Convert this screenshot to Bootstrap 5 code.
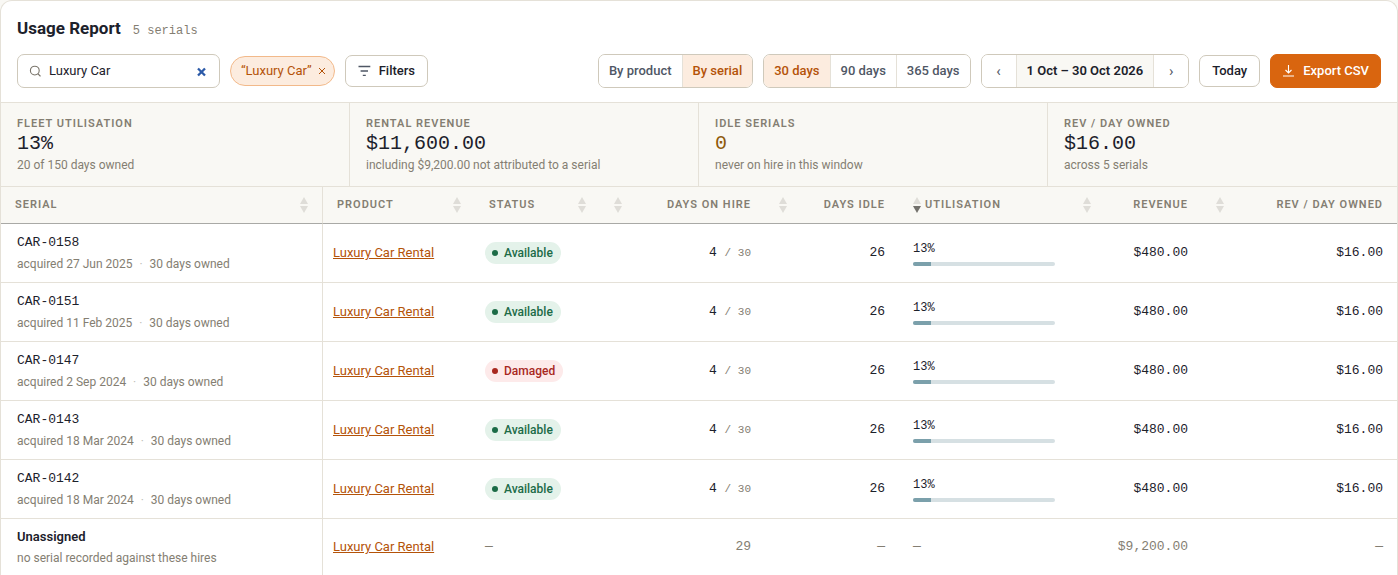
<!DOCTYPE html>
<html lang="en">
<head>
<meta charset="utf-8">
<meta name="viewport" content="width=device-width, initial-scale=1">
<title>Usage Report</title>
<link rel="stylesheet" href="https://cdn.jsdelivr.net/npm/bootstrap@5.3.0/dist/css/bootstrap.min.css">
<style>
:root{--ink:#1c212b;--slate:#4f5765;--muted:#847e72;--line:#e5e1d8;--edge:#cfc9bb;--paper:#f9f8f4;--accent:#b45309;--tint:#fcecdf}
body{background:#f9f8f4;color:var(--ink);font-family:Roboto,"Liberation Sans",sans-serif;font-size:13px;line-height:20px}
.mono{font-family:"Liberation Mono",monospace}
.report{background:#fff;border:1px solid var(--line);border-bottom:0;border-radius:12px 12px 0 0;overflow:hidden}
.report-head{padding:15px 16px 14px}
.report-title{font-size:17px;line-height:24px;font-weight:700}
.report-count{font-size:12px}
.tools{gap:10px;margin-top:13px}
.muted{color:var(--muted)}
.search{width:203px;height:34px;border:1px solid var(--edge);border-radius:7px;padding:0 11px;background:#fff;gap:7px}
.search input{font-size:13px;line-height:20px;color:var(--ink);min-width:0;outline:0}
.plain{border:0;background:none;padding:0;display:flex;color:inherit}
.chip{height:30px;border:1px solid #f2b98a;border-radius:15px;background:var(--tint);color:var(--accent);padding:0 8px 0 10px;gap:6px}
.btn-tool{--bs-btn-font-size:13px;--bs-btn-line-height:20px;--bs-btn-padding-y:5px;--bs-btn-padding-x:12px;--bs-btn-font-weight:500;--bs-btn-border-radius:7px;--bs-btn-color:var(--ink);--bs-btn-bg:#fff;--bs-btn-border-color:var(--edge);--bs-btn-hover-bg:var(--paper);--bs-btn-hover-border-color:var(--edge)}
.btn-export{--bs-btn-padding-y:6px;--bs-btn-padding-x:11px;--bs-btn-color:#fff;--bs-btn-bg:#d9650f;--bs-btn-border-color:#d9650f;--bs-btn-hover-color:#fff;--bs-btn-hover-bg:#b45309;--bs-btn-hover-border-color:#b45309}
.seg{display:flex;height:34px;border:1px solid var(--edge);border-radius:7px;overflow:hidden}
.seg>*{border:0;background:#fff;color:var(--slate);font-weight:500;padding:0 10px;line-height:32px}
.seg>*+*{border-left:1px solid var(--line)}
.seg>.on{background:var(--tint);color:var(--accent)}
.seg>.step{width:34px;padding:0;font-size:15px;font-weight:400}
.seg>.step:last-child{width:35px}
.seg>.range{background:var(--paper);color:var(--ink);font-weight:600}
.stats{background:var(--paper);border-top:1px solid var(--line);border-bottom:1px solid var(--line)}
.stat{padding:13px 16px 12px}
.stat:not(:last-child){border-right:1px solid var(--line)}
.label{font-size:11px;line-height:16px;font-weight:600;letter-spacing:1px;text-transform:uppercase;color:var(--muted)}
.figure-value{font-size:20px;line-height:24px}
.figure-value.warn{color:#8f5a0a}
.note{font-size:12px;line-height:18px;color:var(--muted)}
.grid-table{table-layout:fixed;width:100%;border-collapse:separate;border-spacing:0}
.grid-table th{height:37px;padding:0 14px;background:var(--paper);border-bottom:1px solid #a9a9a6}
.grid-table td{height:59px;padding:0 14px;border-bottom:1px solid var(--line);vertical-align:middle}
.grid-table tr:last-child td{border-bottom:0;height:56px}
.grid-table tr>:first-child{border-right:1px solid var(--line)}
.grid-table td:first-child{padding:0 16px}
.grid-table td:nth-child(2),.grid-table td:nth-child(3){padding-left:10px}
.num{text-align:right}
.sort{width:8px;height:16px;flex:none;fill:#dfddd8}
.sort .on{fill:#73716c}
.product{color:var(--accent)}
.product:hover{color:#8a3f06}
.serial-no{line-height:18px;margin-bottom:3px}
.small-num{font-size:11px}
.pill{display:inline-flex;align-items:center;gap:6px;height:22px;border-radius:11px;padding:0 8px 0 7px;font-size:12px;font-weight:500;background:#e4f2ea;color:#1c6b47;vertical-align:middle}
.pill::before{content:"";width:6px;height:6px;border-radius:3px;background:currentColor}
.pill.bad{background:#fdeaea;color:#a8281f}
.util{font-size:12px;line-height:16px;margin-bottom:5px}
.meter{height:4px;border-radius:2px;background:#d6e0e3;overflow:hidden}
.meter div{height:4px;background:#7ba0ab}
</style>
</head>
<body>
<main class="report">
<header class="report-head">
  <div class="d-flex align-items-baseline gap-2">
    <h1 class="report-title m-0 me-1">Usage Report</h1><span class="report-count mono muted">5 serials</span>
  </div>
  <div class="tools d-flex flex-wrap align-items-center">
    <div class="search d-flex align-items-center">
      <svg width="13" height="13" viewBox="0 0 13 13" fill="none" stroke="#7a756b" stroke-width="1.1" stroke-linecap="round" class="flex-shrink-0"><circle cx="5.8" cy="5.6" r="4.4"/><path d="M9 8.8 11.2 11"/></svg>
      <input type="text" class="border-0 p-0 flex-grow-1 bg-transparent" value="Luxury Car" aria-label="Search">
      <button class="plain" type="button" aria-label="Clear search"><svg width="14" height="14" viewBox="0 0 14 14" stroke="#2c5aa8" stroke-width="2.3"><path d="M4 4.5 11 11.5M11 4.5 4 11.5"/></svg></button>
    </div>
    <div class="chip d-flex align-items-center"><span>“Luxury Car”</span><button class="plain" type="button" aria-label="Remove filter"><svg width="8" height="8" viewBox="0 0 8 8" stroke="currentColor" stroke-width="1"><path d="M1 1 7 7M7 1 1 7"/></svg></button></div>
    <button class="btn btn-tool d-flex align-items-center" type="button"><svg class="me-2" width="13" height="12" viewBox="0 0 13 12" stroke="#4f5765" stroke-width="1.3"><path d="M.5 1.5H12.3M2.6 6H10M4.8 10.3H7.8"/></svg>Filters</button>
    <div class="seg ms-auto" role="group" aria-label="Grouping"><button type="button">By product</button><button type="button" class="on">By serial</button></div>
    <div class="seg" role="group" aria-label="Period"><button type="button" class="on">30 days</button><button type="button">90 days</button><button type="button">365 days</button></div>
    <div class="seg" role="group" aria-label="Date range"><button type="button" class="step" aria-label="Previous">‹</button><span class="range">1 Oct – 30 Oct 2026</span><button type="button" class="step" aria-label="Next">›</button></div>
    <button class="btn btn-tool" type="button">Today</button>
    <button class="btn btn-tool btn-export d-flex align-items-center" type="button"><svg class="me-2" width="13" height="12" viewBox="0 0 13 12" fill="none" stroke="currentColor" stroke-width="1.1"><path d="M6.5 0V8M3.5 5 6.5 8 9.5 5M1 11H12"/></svg>Export CSV</button>
  </div>
</header>
<section class="stats row g-0">
  <div class="stat col-3"><div class="label">Fleet utilisation</div><div class="figure-value mono">13%</div><div class="note">20 of 150 days owned</div></div>
  <div class="stat col-3"><div class="label">Rental revenue</div><div class="figure-value mono">$11,600.00</div><div class="note">including $9,200.00 not attributed to a serial</div></div>
  <div class="stat col-3"><div class="label">Idle serials</div><div class="figure-value warn mono">0</div><div class="note">never on hire in this window</div></div>
  <div class="stat col-3"><div class="label">Rev / day owned</div><div class="figure-value mono">$16.00</div><div class="note">across 5 serials</div></div>
</section>
<table class="grid-table">
<colgroup><col style="width:322px"><col style="width:152px"><col style="width:125px"><col style="width:165px"><col style="width:134px"><col style="width:170px"><col style="width:133px"><col style="width:195px"></colgroup>
<thead><tr id="heads"></tr></thead>
<tbody id="rows"></tbody>
</table>
</main>
<script>
const sortIcon = on => `<svg class="sort" viewBox="0 0 8 16" aria-hidden="true"><path d="M4 0 8 7H0Z"/><path${on ? ' class="on"' : ''} d="M0 9H8L4 16Z"/></svg>`;
const heads = [['Serial'],['Product'],['Status'],['Days on hire',1],['Days idle',1],['Utilisation',2],['Revenue',1],['Rev / day owned',1]];
document.getElementById('heads').innerHTML = heads.map(([t, kind]) => {
  const label = `<span class="label text-nowrap">${t}</span>`;
  if (kind === 2) return `<th scope="col" aria-sort="descending"><div class="d-flex align-items-center gap-1">${sortIcon(true)}${label}</div></th>`;
  return `<th scope="col"><div class="d-flex align-items-center justify-content-between">${kind ? sortIcon() + label : label + sortIcon()}</div></th>`;
}).join('');
const serials = [['CAR-0158','27 Jun 2025'],['CAR-0151','11 Feb 2025'],['CAR-0147','2 Sep 2024','Damaged'],['CAR-0143','18 Mar 2024'],['CAR-0142','18 Mar 2024']];
const link = '<a class="product" href="#">Luxury Car Rental</a>';
document.getElementById('rows').innerHTML = serials.map(([id, date, bad]) => `<tr>
<td><div class="serial-no mono">${id}</div><div class="note">acquired ${date} <span class="mx-1 opacity-50">·</span> 30 days owned</div></td>
<td>${link}</td>
<td><span class="pill${bad ? ' bad' : ''}">${bad || 'Available'}</span></td>
<td class="num mono">4 <span class="small-num muted">/ 30</span></td>
<td class="num mono">26</td>
<td><div class="util mono">13%</div><div class="meter"><div style="width:13%"></div></div></td>
<td class="num mono">$480.00</td><td class="num mono">$16.00</td></tr>`).join('') + `<tr>
<td><div class="serial-no fw-semibold">Unassigned</div><div class="note">no serial recorded against these hires</div></td>
<td>${link}</td><td class="muted mono">—</td><td class="num mono muted">29</td><td class="num mono muted">—</td><td class="mono muted">—</td>
<td class="num mono muted">$9,200.00</td><td class="num mono muted">—</td></tr>`;
</script>
<script src="https://cdn.jsdelivr.net/npm/bootstrap@5.3.0/dist/js/bootstrap.bundle.min.js"></script>
</body>
</html>
